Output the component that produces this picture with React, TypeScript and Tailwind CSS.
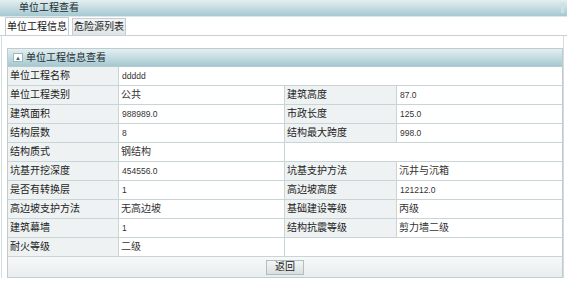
import React from "react";

type Cell = { text?: string; label?: boolean; span?: number };

const rows: Cell[][] = [
  [{ text: "单位工程名称", label: true }, { text: "ddddd", span: 3 }],
  [{ text: "单位工程类别", label: true }, { text: "公共" }, { text: "建筑高度", label: true }, { text: "87.0" }],
  [{ text: "建筑面积", label: true }, { text: "988989.0" }, { text: "市政长度", label: true }, { text: "125.0" }],
  [{ text: "结构层数", label: true }, { text: "8" }, { text: "结构最大跨度", label: true }, { text: "998.0" }],
  [{ text: "结构质式", label: true }, { text: "钢结构" }, { text: "", span: 2 }],
  [{ text: "坑基开挖深度", label: true }, { text: "454556.0" }, { text: "坑基支护方法", label: true }, { text: "沉井与沉箱" }],
  [{ text: "是否有转换层", label: true }, { text: "1" }, { text: "高边坡高度", label: true }, { text: "121212.0" }],
  [{ text: "高边坡支护方法", label: true }, { text: "无高边坡" }, { text: "基础建设等级", label: true }, { text: "丙级" }],
  [{ text: "建筑幕墙", label: true }, { text: "1" }, { text: "结构抗震等级", label: true }, { text: "剪力墙二级" }],
  [{ text: "耐火等级", label: true }, { text: "二级" }, { text: "", span: 2 }],
];

// column widths: label, value, label, value
const widths = [111, 166, 112, 165];

function cellWidth(col: number, span: number) {
  let w = 0;
  for (let i = col; i < col + span; i++) w += widths[i];
  return w;
}

const isLatin = (s?: string) => !!s && /^[\x00-\x7f]+$/.test(s);

function Row({ cells }: { cells: Cell[] }) {
  let col = 0;
  return (
    <div className="flex h-[19px] border-b border-[#c9d4d7]">
      {cells.map((c, i) => {
        const span = c.span ?? 1;
        const w = cellWidth(col, span);
        col += span;
        const last = col >= 4;
        return (
          <div
            key={i}
            style={{ width: w }}
            className={`flex shrink-0 items-center whitespace-nowrap pl-[2px] ${last ? "" : "border-r border-[#c9d4d7]"} ${
              c.label ? "bg-[#eef2f3] text-[#222]" : "bg-white text-[#333]"
            } ${isLatin(c.text) ? "pl-[3px] text-[8.5px]" : ""}`}
          >
            {c.text}
          </div>
        );
      })}
    </div>
  );
}

export default function App() {
  return (
    <div
      className="h-[288px] w-[567px] overflow-hidden bg-white text-[10px] leading-none text-[#222]"
      style={{ fontFamily: '"Liberation Sans", "Noto Sans CJK SC", sans-serif' }}
    >
      {/* window title */}
      <div className="flex h-[17px] items-center border-b border-[#dbe7ea] bg-gradient-to-b from-[#e4eff1] via-[#c4dce1] to-[#a5c8d0] pl-[19px] pr-[3px]">
        <span className="text-[#1d2d33]">单位工程查看</span>
        <span className="ml-auto h-[10px] w-[3px] bg-[#cfe0e4]" />
      </div>

      {/* tabs */}
      <div className="flex h-[19px] items-end gap-[3px] border-b border-[#c8d2d6] pl-[5px]">
        <div className="flex h-[18px] w-[64px] items-center justify-center whitespace-nowrap border border-b-0 border-[#c4ced2] bg-white text-[#111]">
          单位工程信息
        </div>
        <div className="flex h-[17px] w-[54px] items-center justify-center whitespace-nowrap border border-b-0 border-[#c4ced2] bg-gradient-to-b from-[#f2f4f5] to-[#dfe4e6] text-[#222]">
          危险源列表
        </div>
      </div>

      {/* content */}
      <div className="ml-[1px] mr-[3px] h-[242px] border-l border-r border-[#d3dcdf] pl-[5px] pt-[12px]">
        <div className="w-[556px] border border-[#bfcbcf]">
          <div className="flex h-[18px] items-center gap-[3px] border-b border-[#b6c9ce] bg-gradient-to-b from-[#e4eff1] via-[#c4dce1] to-[#a5c8d0] pl-[5px]">
            <span className="flex h-[9px] w-[10px] items-center justify-center border border-[#9fb9c0] bg-white text-[6px] text-[#3b5f6a]">
              ▲
            </span>
            <span className="text-[#1d2d33]">单位工程信息查看</span>
          </div>
          {rows.map((r, i) => (
            <Row key={i} cells={r} />
          ))}
          <div className="flex h-[20px] items-center justify-center bg-gradient-to-b from-[#f7f9f9] to-[#e8eded]">
            <button
              type="button"
              className="flex h-[15px] w-[38px] items-center justify-center border border-[#b3bcbf] bg-gradient-to-b from-[#f4f6f6] to-[#d9dfe0] text-[10px] text-[#222]"
            >
              返回
            </button>
          </div>
        </div>
      </div>
    </div>
  );
}
